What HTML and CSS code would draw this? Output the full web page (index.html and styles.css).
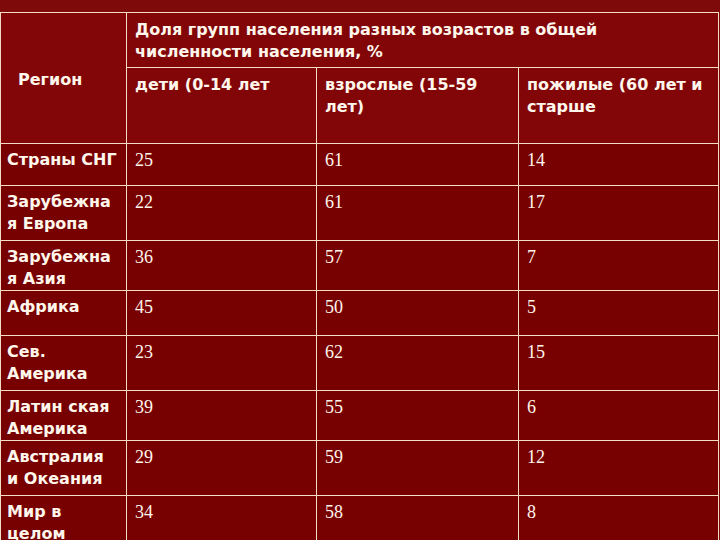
FILE: index.html
```html
<!DOCTYPE html>
<html lang="ru">
<head>
<meta charset="utf-8">
<link rel="stylesheet" href="styles.css">
</head>
<body>
<table class="grid">
  <colgroup>
    <col class="c1"><col class="c2"><col class="c3"><col class="c4">
  </colgroup>
  <tr class="h1">
    <th class="region" rowspan="2">Регион</th>
    <th class="group" colspan="3">Доля групп населения разных возрастов в общей<br>численности населения, %</th>
  </tr>
  <tr class="h2">
    <th class="sub">дети (0-14 лет</th>
    <th class="sub">взрослые (15-59<br>лет)</th>
    <th class="sub">пожилые (60 лет и<br>старше</th>
  </tr>
  <tr class="r42"><td class="name">Страны СНГ</td><td>25</td><td>61</td><td>14</td></tr>
  <tr class="r55"><td class="name">Зарубежна<br>я Европа</td><td>22</td><td>61</td><td>17</td></tr>
  <tr class="r50"><td class="name">Зарубежна<br>я Азия</td><td>36</td><td>57</td><td>7</td></tr>
  <tr class="r45"><td class="name">Африка</td><td>45</td><td>50</td><td>5</td></tr>
  <tr class="r55"><td class="name">Сев.<br>Америка</td><td>23</td><td>62</td><td>15</td></tr>
  <tr class="r50"><td class="name">Латин ская<br>Америка</td><td>39</td><td>55</td><td>6</td></tr>
  <tr class="r55"><td class="name">Австралия<br>и Океания</td><td>29</td><td>59</td><td>12</td></tr>
  <tr class="r55"><td class="name">Мир в<br>целом</td><td>34</td><td>58</td><td>8</td></tr>
</table>
</body>
</html>
```

FILE: styles.css
```css
html, body {
  margin: 0;
  padding: 0;
  background: #7e0a0a;
  width: 720px;
  height: 540px;
  overflow: hidden;
}

.grid {
  margin-top: 12px;
  border-collapse: collapse;
  table-layout: fixed;
  width: 718px;
  color: #fff6ec;
}

.c1 { width: 126px; }
.c2 { width: 190px; }
.c3 { width: 202px; }
.c4 { width: 200px; }

.grid th,
.grid td {
  border: 1px solid #f2dcc6;
  text-align: left;
  vertical-align: top;
  padding: 5px 6px 0 8px;
  line-height: 22px;
  background: #770000;
}

.grid th,
.grid td.name {
  font-family: "DejaVu Sans", Verdana, sans-serif;
  font-weight: bold;
  font-size: 16px;
}

.grid td {
  font-family: "Liberation Serif", "Times New Roman", serif;
  font-size: 18px;
}

.grid td.name {
  padding-left: 6px;
}

.grid th {
  background: #820608;
}

.region {
  vertical-align: middle !important;
  padding-left: 17px !important;
  padding-top: 4px !important;
}

.h1 { height: 55px; }
.h2 { height: 76px; }
.group { padding-top: 6px !important; }
.sub { padding-top: 6px !important; }

.r42 { height: 42px; }
.r45 { height: 45px; }
.r50 { height: 50px; }
.r55 { height: 55px; }
```
